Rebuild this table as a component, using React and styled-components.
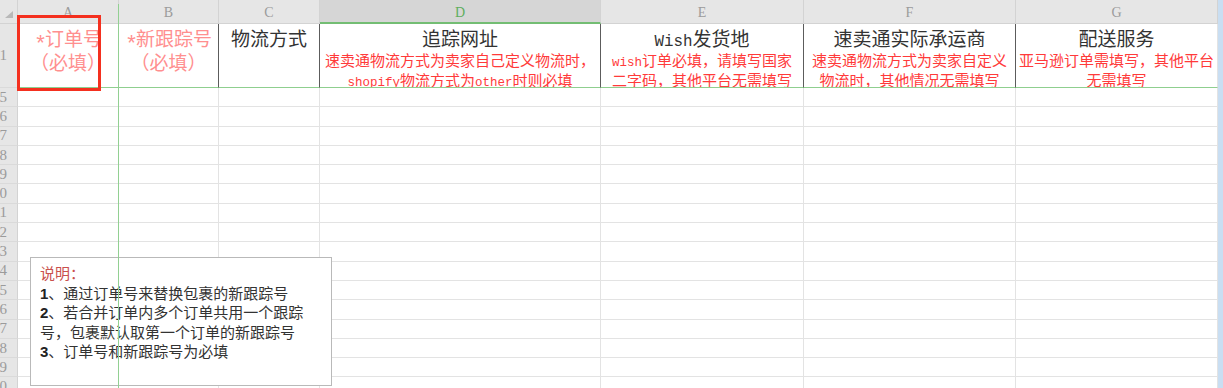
import React from "react";
import styled, { createGlobalStyle } from "styled-components";

const COLUMNS = ["A", "B", "C", "D", "E", "F", "G"];
const BODY_ROWS = [5, 6, 7, 8, 9, 10, 11, 12, 13, 14, 15, 16, 17, 18, 19, 20];

const HEADINGS = [
  { required: ["*订单号", "（必填）"] },
  { required: ["*新跟踪号", "（必填）"], edge: true },
  { title: "物流方式", edge: true },
  {
    title: "追踪网址",
    notes: ["速卖通物流方式为卖家自己定义物流时，", "shopify物流方式为other时则必填"],
    edge: true,
  },
  {
    title: "Wish发货地",
    notes: ["wish订单必填，请填写国家", "二字码，其他平台无需填写"],
    edge: true,
  },
  {
    title: "速卖通实际承运商",
    notes: ["速卖通物流方式为卖家自定义", "物流时，其他情况无需填写"],
    edge: true,
  },
  { title: "配送服务", notes: ["亚马逊订单需填写，其他平台", "无需填写"] },
];

// latin runs are half width in the sheet font, so set them in a narrow mono
const mixed = (text) =>
  text.split(/([A-Za-z]+|\*)/).map((part, i) => {
    if (part === "*") return <Star key={i}>*</Star>;
    if (/^[A-Za-z]+$/.test(part)) return <Lat key={i}>{part}</Lat>;
    return part;
  });

const App = () => {
  return (
    <>
      <GlobalStyle />
      <Screen>
        <Sheet>
          <Corner>
            <svg width="8" height="7" viewBox="0 0 8 7">
              <path d="M8 0 L8 7 L0 7 Z" fill="#b9b9b9" />
            </svg>
          </Corner>
          {COLUMNS.map((c) => (
            <ColHead key={c} $active={c === "D"}>
              {c}
            </ColHead>
          ))}

          <RowHead>1</RowHead>
          {HEADINGS.map((h, i) => (
            <TitleCell key={i} $edge={h.edge}>
              {h.required &&
                h.required.map((line) => <Required key={line}>{mixed(line)}</Required>)}
              {h.title && <Title>{mixed(h.title)}</Title>}
              {h.notes && h.notes.map((line) => <Note key={line}>{mixed(line)}</Note>)}
            </TitleCell>
          ))}

          {BODY_ROWS.map((r) => (
            <React.Fragment key={r}>
              <RowHead>{r}</RowHead>
              {COLUMNS.map((c) => (
                <Cell key={c} />
              ))}
            </React.Fragment>
          ))}
        </Sheet>
        <ScrollEdge />

        <FreezeLine />
        <Memo>
          <MemoHead>说明：</MemoHead>
          <MemoLine>
            <Num>1</Num>、通过订单号来替换包裹的新跟踪号
          </MemoLine>
          <MemoLine>
            <Num>2</Num>、若合并订单内多个订单共用一个跟踪
          </MemoLine>
          <MemoLine>号，包裹默认取第一个订单的新跟踪号</MemoLine>
          <MemoLine>
            <Num>3</Num>、订单号和新跟踪号为必填
          </MemoLine>
        </Memo>
        <Highlight />
      </Screen>
    </>
  );
};

export default App;

const GlobalStyle = createGlobalStyle`
  *, *::before, *::after { box-sizing: border-box; }
  html, body {
    margin: 0;
    padding: 0;
    background: #fff;
    overflow: hidden;
  }
  body {
    font-family: "Noto Sans CJK SC", sans-serif;
  }
`;

const Screen = styled.div`
  position: relative;
  display: flex;
  width: 1223px;
  height: 388px;
  overflow: hidden;
`;

const Sheet = styled.div`
  display: grid;
  grid-template-columns: 18px 101px 100px 101px 281px 203px 212px 202px;
  grid-template-rows: 24px 64px;
  grid-auto-rows: 19.3px;
  width: 1218px;
  flex: none;
`;

const ScrollEdge = styled.div`
  width: 5px;
  background: #c9def2;
`;

const Corner = styled.div`
  display: flex;
  align-items: flex-end;
  justify-content: flex-end;
  padding: 0 4px 5px 0;
  background: #e6e6e6;
  border-right: 1px solid #d3d3d3;
  border-bottom: 1px solid #d3d3d3;
`;

const ColHead = styled.div`
  display: flex;
  align-items: center;
  justify-content: center;
  padding-top: 3px;
  background: ${(p) => (p.$active ? "#d6d6d6" : "#e6e6e6")};
  border-right: 1px solid #d3d3d3;
  border-bottom: ${(p) => (p.$active ? "2px solid #73bd73" : "1px solid #d3d3d3")};
  color: ${(p) => (p.$active ? "#5fae5f" : "#9b9b9b")};
  font: 14px "Liberation Serif", serif;
`;

const RowHead = styled.div`
  display: flex;
  align-items: center;
  justify-content: flex-end;
  overflow: hidden;
  padding-right: 10px;
  white-space: nowrap;
  background: #e6e6e6;
  border-right: 1px solid #d3d3d3;
  border-bottom: 1px solid #dadada;
  color: #9b9b9b;
  font: 15px "Liberation Serif", serif;
`;

const Cell = styled.div`
  background: #fff;
  border-right: 1px solid #e3e3e3;
  border-bottom: 1px solid #e3e3e3;
`;

const TitleCell = styled.div`
  display: flex;
  flex-direction: column;
  align-items: center;
  overflow: hidden;
  padding-top: 2px;
  white-space: nowrap;
  text-align: center;
  background: #fff;
  border-right: 1px solid ${(p) => (p.$edge ? "#5c5c5c" : "#e3e3e3")};
  border-bottom: 1px solid #8fcf8f;
`;

const Title = styled.div`
  height: 24px;
  font-size: 19px;
  line-height: 24px;
  color: #333;
`;

const Required = styled.div`
  height: 24px;
  font-size: 19px;
  line-height: 24px;
  color: #ff8f8f;
`;

const Note = styled.div`
  height: 19.5px;
  font-size: 15px;
  line-height: 19.5px;
  color: #ff3a3a;
`;

const Lat = styled.span`
  font-family: "Liberation Mono", monospace;
  font-size: 0.834em;
  line-height: 0;
`;

const Star = styled.span`
  display: inline-block;
  font-family: "Liberation Mono", monospace;
  font-size: 1.15em;
  width: 0.5em;
  line-height: 0;
  vertical-align: -0.22em;
`;

const FreezeLine = styled.div`
  position: absolute;
  left: 118px;
  top: 4px;
  bottom: 0;
  width: 1px;
  background: #92d092;
  z-index: 3;
`;

const Memo = styled.div`
  position: absolute;
  left: 30px;
  top: 257px;
  width: 302px;
  height: 129px;
  padding: 5px 0 0 9px;
  background: #fff;
  border: 1px solid #b9b9b9;
  z-index: 2;
  font-size: 15px;
  line-height: 19.5px;
  color: #333;
`;

const MemoHead = styled.div`
  color: #c9504d;
`;

const MemoLine = styled.div`
  white-space: nowrap;
`;

const Num = styled.span`
  font-family: "Liberation Sans", sans-serif;
  font-weight: 700;
  line-height: 0;
  color: #222;
`;

const Highlight = styled.div`
  position: absolute;
  left: 17px;
  top: 15px;
  width: 84px;
  height: 76px;
  border: 3px solid #f4301f;
  z-index: 4;
`;
